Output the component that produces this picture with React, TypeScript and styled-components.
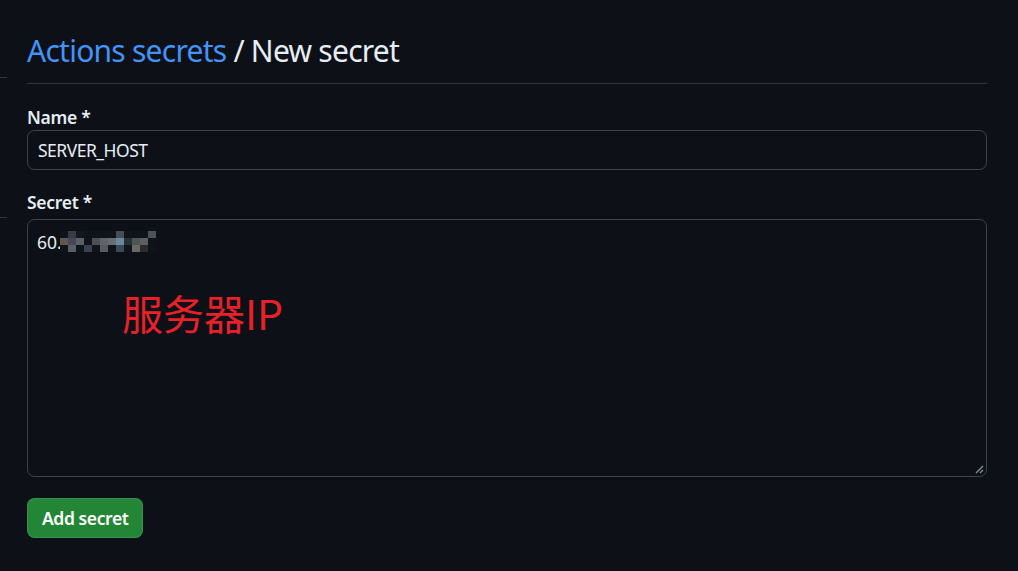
import React from "react";
import styled, { createGlobalStyle } from "styled-components";

const GlobalStyle = createGlobalStyle`
  html, body {
    margin: 0;
    padding: 0;
    background: #0d1117;
  }
  body {
    font-family: "Noto Sans", "Open Sans", sans-serif;
    color: #e6edf3;
  }
  * { box-sizing: border-box; }
`;

const Page = styled.div`
  display: flex;
  min-height: 571px;
  background: #0d1117;
`;

const SideStub = styled.div`
  width: 7px;
  flex-shrink: 0;
  display: flex;
  flex-direction: column;
`;

const StubLine = styled.div<{ $top: number }>`
  height: 1px;
  background: #30363d;
  margin-top: ${(p) => p.$top}px;
`;

const Main = styled.main`
  margin-left: 20px;
  width: 960px;
  padding-top: 28px;
`;

const Subhead = styled.h2`
  margin: 0 0 20px;
  padding-bottom: 10px;
  border-bottom: 1px solid #30363d;
  font-size: 30px;
  line-height: 45px;
  font-weight: 400;
  letter-spacing: -0.75px;
  color: #e6edf3;
`;

const Crumb = styled.a`
  color: #4493f8;
  text-decoration: none;
`;

const FormGroup = styled.div<{ $gap?: number }>`
  display: flex;
  flex-direction: column;
  margin-bottom: ${(p) => p.$gap ?? 0}px;
`;

const Label = styled.label<{ $mb?: number }>`
  font-size: 17.5px;
  line-height: 26px;
  font-weight: 600;
  letter-spacing: -0.3px;
  color: #e6edf3;
  margin-bottom: ${(p) => p.$mb ?? 0}px;
`;

const Input = styled.div`
  height: 40px;
  border: 1px solid #3d444d;
  border-radius: 7.5px;
  background: #0d1117;
  padding: 0 10px;
  display: flex;
  align-items: center;
  font-size: 17.5px;
  letter-spacing: -0.5px;
  color: #e6edf3;
`;

const TextArea = styled.div`
  position: relative;
  height: 258px;
  border: 1px solid #3d444d;
  border-radius: 7.5px;
  background: #0d1117;
  padding: 9px 9px;
  font-size: 17.5px;
  line-height: 26px;
  color: #e6edf3;
`;

const ValueLine = styled.div`
  display: flex;
  align-items: flex-start;
`;

const Mosaic = styled.span`
  display: inline-grid;
  grid-template-columns: repeat(12, 8px);
  grid-auto-rows: 7px;
  margin-top: 2px;
  margin-left: -2px;
`;

const Cell = styled.span<{ $c: string }>`
  background: ${(p) => p.$c};
`;

const Annotation = styled.span`
  position: absolute;
  left: 94px;
  top: 72px;
  font-family: "Noto Sans CJK SC", "Noto Sans", sans-serif;
  font-size: 41px;
  line-height: 1;
  color: #e8202a;
`;

const ResizeHandle = styled.svg`
  position: absolute;
  right: 2px;
  bottom: 2px;
`;

const Button = styled.button`
  margin-top: 21px;
  height: 40px;
  padding: 0 14px;
  border: 1px solid rgba(240, 246, 252, 0.1);
  border-radius: 7.5px;
  background: #238636;
  color: #ffffff;
  font-family: "Noto Sans", "Open Sans", sans-serif;
  font-size: 17.5px;
  font-weight: 600;
  letter-spacing: -0.4px;
  cursor: pointer;
`;

const D = "#0f131a";
const mosaic = [
  [D, "#363b47", "#16161e", D, D, D, D, "#474c55", D, D, D, "#4d5257"],
  ["#5a5a50", "#4a4658", "#5a6068", D, "#4e4e55", "#5f6368", "#686b70", "#6a8898", "#283038", "#4e5358", "#5e5e5c", D],
  [D, "#5a5e66", D, "#3c4054", D, "#585c62", D, "#3a4a56", D, "#6a6a62", "#2a2c30", D],
];

export default function App() {
  return (
    <>
      <GlobalStyle />
      <Page>
        <SideStub>
          <StubLine $top={77} />
          <StubLine $top={139} />
        </SideStub>
        <Main>
          <Subhead>
            <Crumb href="#">Actions secrets</Crumb> / New secret
          </Subhead>
          <FormGroup $gap={19}>
            <Label>Name *</Label>
            <Input>SERVER_HOST</Input>
          </FormGroup>
          <FormGroup>
            <Label $mb={4}>Secret *</Label>
            <TextArea>
              <ValueLine>
                <span>60.</span>
                <Mosaic>
                  {mosaic.flat().map((c, i) => (
                    <Cell key={i} $c={c} />
                  ))}
                </Mosaic>
              </ValueLine>
              <Annotation>服务器IP</Annotation>
              <ResizeHandle width="10" height="10" viewBox="0 0 10 10">
                <path d="M2 9 L9 2 M6 9 L9 6" stroke="#8b949e" strokeWidth="1.3" />
              </ResizeHandle>
            </TextArea>
          </FormGroup>
          <Button>Add secret</Button>
        </Main>
      </Page>
    </>
  );
}
